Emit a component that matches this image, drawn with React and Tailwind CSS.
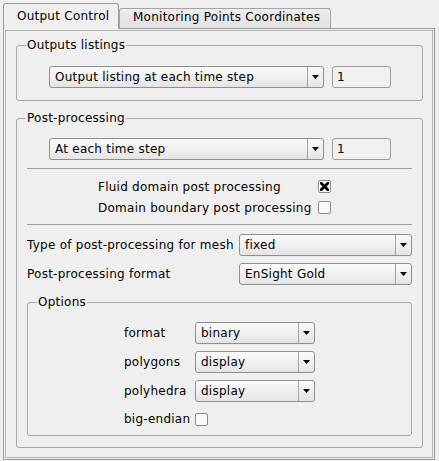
import React from 'react';

const Combo = ({ value, className }) => (
    <div className={`flex h-[22px] rounded-[3px] border border-[#8f8f8f] bg-linear-to-b from-[#fcfcfc] to-[#e4e4e4] ${className}`}>
        <div className="flex-1 pl-[5px] leading-[20px] truncate">{value}</div>
        <div className="w-[16px] border-l border-[#a2a2a2] flex items-center justify-center">
            <svg width="7" height="4" viewBox="0 0 7 4">
                <path d="M0 0h7L3.5 4z" fill="#000" />
            </svg>
        </div>
    </div>
);

const SpinBox = ({ value }) => (
    <div className="w-[59px] h-[22px] rounded-[3px] border border-[#9c9c9c] bg-[#f0f0f0] pl-[4px] leading-[20px]">
        {value}
    </div>
);

const Check = ({ checked }) => (
    <div className="w-[13px] h-[13px] rounded-[2px] border border-[#8c8c8c] bg-[#f9f9f9] flex items-center justify-center">
        {checked && (
            <svg width="9" height="9" viewBox="0 0 9 9">
                <path d="M1.2 1.2L7.8 7.8M7.8 1.2L1.2 7.8" stroke="#000" strokeWidth="2.8" strokeLinecap="square" />
            </svg>
        )}
    </div>
);

const Group = ({ title, className, children }) => (
    <fieldset className={`border border-[#a8a8a8] rounded-[3px] ${className}`}>
        <legend className="ml-[9px] px-px leading-[14px]">{title}</legend>
        {children}
    </fieldset>
);

const Separator = ({ className }) => <div className={`mx-[10px] h-px bg-[#a0a0a0] ${className}`}></div>;

export default function App() {
    return (
        <div className="w-[439px] h-[461px] overflow-hidden bg-[#efefef] pt-[3px] pl-[3px] text-[12px] tracking-[0.25px] text-black font-['DejaVu_Sans',sans-serif]">
            {/* Tabs */}
            <div className="flex items-end h-[26px] -mb-px">
                <div className="relative z-10 w-[116px] h-[26px] rounded-t-[3px] border border-b-0 border-[#9c9c9c] bg-[#efefef] pl-[13px] pt-[5px] leading-[15px]">
                    Output Control
                </div>
                <div className="w-[212px] h-[20px] mb-px rounded-t-[3px] border border-b-0 border-[#a4a4a4] bg-linear-to-b from-[#ededed] to-[#e1e1e1] pl-[13px] pt-[1px] leading-[15px]">
                    Monitoring Points Coordinates
                </div>
            </div>

            {/* Pane */}
            <div className="w-[432px] h-[432px] border border-[#9c9c9c] p-px">
                <div className="h-full border border-[#b4b4b4] pl-[10px] pt-[7px]">
                    <Group title="Outputs listings" className="w-[407px]">
                        <div className="flex gap-[8px] pl-[32px] pt-[14px] pb-[12px]">
                            <Combo value="Output listing at each time step" className="w-[275px]" />
                            <SpinBox value="1" />
                        </div>
                    </Group>

                    <Group title="Post-processing" className="w-[407px] mt-[10px]">
                        <div className="flex gap-[8px] pl-[32px] pt-[13px]">
                            <Combo value="At each time step" className="w-[275px]" />
                            <SpinBox value="1" />
                        </div>

                        <Separator className="mt-[8px]" />

                        <div className="grid grid-cols-[220px_13px] auto-rows-[21px] items-center mt-[7px] pl-[81px]">
                            <span>Fluid domain post processing</span>
                            <Check checked />
                            <span>Domain boundary post processing</span>
                            <Check />
                        </div>

                        <Separator className="mt-[6px]" />

                        <div className="px-[10px] pb-[11px]">
                            <div className="flex items-center mt-[9px]">
                                <span className="w-[212px]">Type of post-processing for mesh</span>
                                <Combo value="fixed" className="w-[173px]" />
                            </div>
                            <div className="flex items-center mt-[7px]">
                                <span className="w-[212px]">Post-processing format</span>
                                <Combo value="EnSight Gold" className="w-[173px]" />
                            </div>

                            <Group title="Options" className="w-[385px] mt-[10px]">
                                <div className="grid grid-cols-[71px_120px] gap-y-[7px] items-center pl-[96px] pt-[13px] pb-[6px]">
                                    <span>format</span>
                                    <Combo value="binary" className="w-[120px]" />
                                    <span>polygons</span>
                                    <Combo value="display" className="w-[120px]" />
                                    <span>polyhedra</span>
                                    <Combo value="display" className="w-[120px]" />
                                    <span className="h-[20px] leading-[20px]">big-endian</span>
                                    <Check />
                                </div>
                            </Group>
                        </div>
                    </Group>
                </div>
            </div>
        </div>
    );
}
